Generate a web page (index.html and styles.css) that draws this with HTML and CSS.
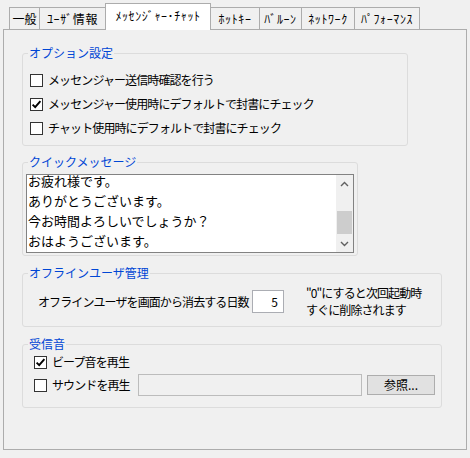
FILE: index.html
```html
<!DOCTYPE html>
<html lang="ja">
<head>
<meta charset="utf-8">
<title>設定</title>
<link rel="stylesheet" href="styles.css">
</head>
<body>
<div class="dialog">
  <div class="tabs">
    <div class="tab tab-general">一般</div>
    <div class="tab tab-user">ﾕｰｻﾞ情報</div>
    <div class="tab tab-msg active">ﾒｯｾﾝｼﾞｬｰ･ﾁｬｯﾄ</div>
    <div class="tab tab-hotkey">ﾎｯﾄｷｰ</div>
    <div class="tab tab-balloon">ﾊﾞﾙｰﾝ</div>
    <div class="tab tab-net">ﾈｯﾄﾜｰｸ</div>
    <div class="tab tab-perf">ﾊﾟﾌｫｰﾏﾝｽ</div>
  </div>
  <div class="panel">
    <fieldset class="group group-options">
      <legend>オプション設定</legend>
      <div class="group-body options-body">
        <div class="check-row"><span class="cb"></span><span class="label">メッセンジャー送信時確認を行う</span></div>
        <div class="check-row"><span class="cb"><svg viewBox="0 0 11 11" width="11" height="11"><polyline points="1.6,5.6 4.2,8.2 9.4,2.2" fill="none" stroke="#000" stroke-width="1.9"/></svg></span><span class="label">メッセンジャー使用時にデフォルトで封書にチェック</span></div>
        <div class="check-row"><span class="cb"></span><span class="label">チャット使用時にデフォルトで封書にチェック</span></div>
      </div>
    </fieldset>

    <fieldset class="group group-quick">
      <legend>クイックメッセージ</legend>
      <div class="group-body quick-body">
        <div class="listbox">
          <div class="list-items">
            <div class="list-inner">
              <div class="item">お疲れ様です。</div>
              <div class="item">ありがとうございます。</div>
              <div class="item">今お時間よろしいでしょうか？</div>
              <div class="item">おはようございます。</div>
            </div>
          </div>
          <div class="scrollbar">
            <div class="sb-btn"><svg viewBox="0 0 9 6" width="9" height="6"><polyline points="1,5 4.5,1.5 8,5" fill="none" stroke="#606060" stroke-width="1.4"/></svg></div>
            <div class="sb-track"><div class="sb-thumb"></div></div>
            <div class="sb-btn"><svg viewBox="0 0 9 6" width="9" height="6"><polyline points="1,1 4.5,4.5 8,1" fill="none" stroke="#606060" stroke-width="1.4"/></svg></div>
          </div>
        </div>
      </div>
    </fieldset>

    <fieldset class="group group-offline">
      <legend>オフラインユーザ管理</legend>
      <div class="group-body offline-body">
        <span class="offline-label">オフラインユーザを画面から消去する日数</span>
        <span class="num-input">5</span>
        <div class="note">
          <div>"0"にすると次回起動時</div>
          <div>すぐに削除されます</div>
        </div>
      </div>
    </fieldset>

    <fieldset class="group group-sound">
      <legend>受信音</legend>
      <div class="group-body sound-body">
        <div class="check-row sound-row1"><span class="cb"><svg viewBox="0 0 11 11" width="11" height="11"><polyline points="1.6,5.6 4.2,8.2 9.4,2.2" fill="none" stroke="#000" stroke-width="1.9"/></svg></span><span class="label">ビープ音を再生</span></div>
        <div class="sound-row2">
          <div class="check-row sound-check"><span class="cb"></span><span class="label">サウンドを再生</span></div>
          <span class="file-field"></span>
          <span class="button">参照...</span>
        </div>
      </div>
    </fieldset>
  </div>
</div>
</body>
</html>
```

FILE: styles.css
```css
html, body {
  margin: 0;
  padding: 0;
  background: #f0f0f0;
}
body {
  width: 470px;
  height: 458px;
  overflow: hidden;
  font-family: "Noto Sans CJK JP", "Noto Sans", sans-serif;
  font-size: 12px;
  color: #000;
}
.dialog {
  padding-top: 3px;
}
.tabs {
  display: flex;
  align-items: flex-end;
  height: 26px;
  padding-left: 9px;
  position: relative;
  z-index: 2;
}
.tab {
  box-sizing: border-box;
  height: 22px;
  border: 1px solid #acacac;
  border-bottom: none;
  background: #f0f0f0;
  margin-left: -1px;
  display: flex;
  align-items: center;
  justify-content: center;
  font-size: 12px;
  line-height: 14px;
  white-space: nowrap;
  letter-spacing: 0.6px;
}
.tab:first-child { margin-left: 0; }
.tab.active {
  height: 27px;
  margin-bottom: -1px;
  background: #ffffff;
  padding-bottom: 3px;
}
.tab-general { width: 31px; letter-spacing: 0; }
.tab-user { width: 67px; }
.tab-msg { width: 106px; }
.tab-hotkey { width: 50px; }
.tab-balloon { width: 43px; }
.tab-net { width: 54px; }
.tab-perf { width: 66px; }

.panel {
  box-sizing: border-box;
  margin-left: 3px;
  width: 464px;
  height: 421px;
  border: 1px solid #acacac;
  padding: 16px 0 0 18px;
  position: relative;
  z-index: 1;
}

.group {
  box-sizing: border-box;
  margin: 0;
  padding: 0;
  border: 1px solid #dcdcdc;
  border-radius: 3px;
  min-width: 0;
}
.group legend {
  margin-left: 5px;
  padding: 0 1px;
  font-size: 12px;
  line-height: 14px;
  color: #0046d5;
}
.group-options { width: 386px; }
.group-quick { width: 336px; margin-top: 9px; }
.group-offline { width: 420px; margin-top: 10px; }
.group-sound { width: 420px; margin-top: 10px; }

.check-row {
  display: flex;
  align-items: center;
  gap: 5px;
}
.label {
  letter-spacing: -0.9px;
  white-space: nowrap;
  line-height: 16px;
}
.cb {
  box-sizing: border-box;
  width: 13px;
  height: 13px;
  border: 1px solid #333333;
  background: #ffffff;
  display: flex;
  align-items: center;
  justify-content: center;
  flex: none;
}
.cb svg { display: block; }

.options-body {
  padding: 8px 0 5px 7px;
}
.options-body .check-row {
  height: 24px;
}

.quick-body {
  padding: 5px 3px 2px 3px;
}
.listbox {
  box-sizing: border-box;
  height: 79px;
  border: 1px solid #828282;
  background: #ffffff;
  display: flex;
}
.list-items {
  flex: 1;
  overflow: hidden;
  padding-left: 1px;
}
.list-inner {
  margin-top: -4px;
}
.item {
  font-size: 13px;
  line-height: 20px;
  height: 20px;
  white-space: nowrap;
}
.scrollbar {
  width: 17px;
  background: #f0f0f0;
  display: flex;
  flex-direction: column;
}
.sb-btn {
  height: 17px;
  display: flex;
  align-items: center;
  justify-content: center;
}
.sb-btn svg { display: block; }
.sb-track {
  flex: 1;
  padding: 0 1px;
}
.sb-thumb {
  margin-top: 19px;
  height: 23px;
  background: #cdcdcd;
}

.offline-body {
  display: flex;
  align-items: center;
  padding: 4px 0 8px 15px;
}
.offline-label {
  width: 214px;
  letter-spacing: -0.9px;
  white-space: nowrap;
}
.num-input {
  box-sizing: border-box;
  width: 32px;
  height: 23px;
  border: 1px solid #abadb3;
  background: #ffffff;
  display: flex;
  align-items: center;
  justify-content: flex-end;
  padding-right: 5px;
  font-size: 12px;
}
.note {
  margin-left: 22px;
  line-height: 17px;
  letter-spacing: -0.9px;
  white-space: nowrap;
}

.sound-body {
  padding: 1px 0 10px 11px;
}
.sound-row1 {
  height: 20px;
}
.sound-row2 {
  margin-top: 1px;
  height: 24px;
  display: flex;
  align-items: center;
}
.sound-check {
  width: 104px;
  height: 24px;
}
.file-field {
  box-sizing: border-box;
  width: 224px;
  height: 22px;
  border: 1px solid #bcbcbc;
  background: #f0f0f0;
}
.button {
  box-sizing: border-box;
  margin-left: 5px;
  width: 68px;
  height: 20px;
  border: 1px solid #adadad;
  background: #e1e1e1;
  display: flex;
  align-items: center;
  justify-content: center;
  line-height: 14px;
}
```
